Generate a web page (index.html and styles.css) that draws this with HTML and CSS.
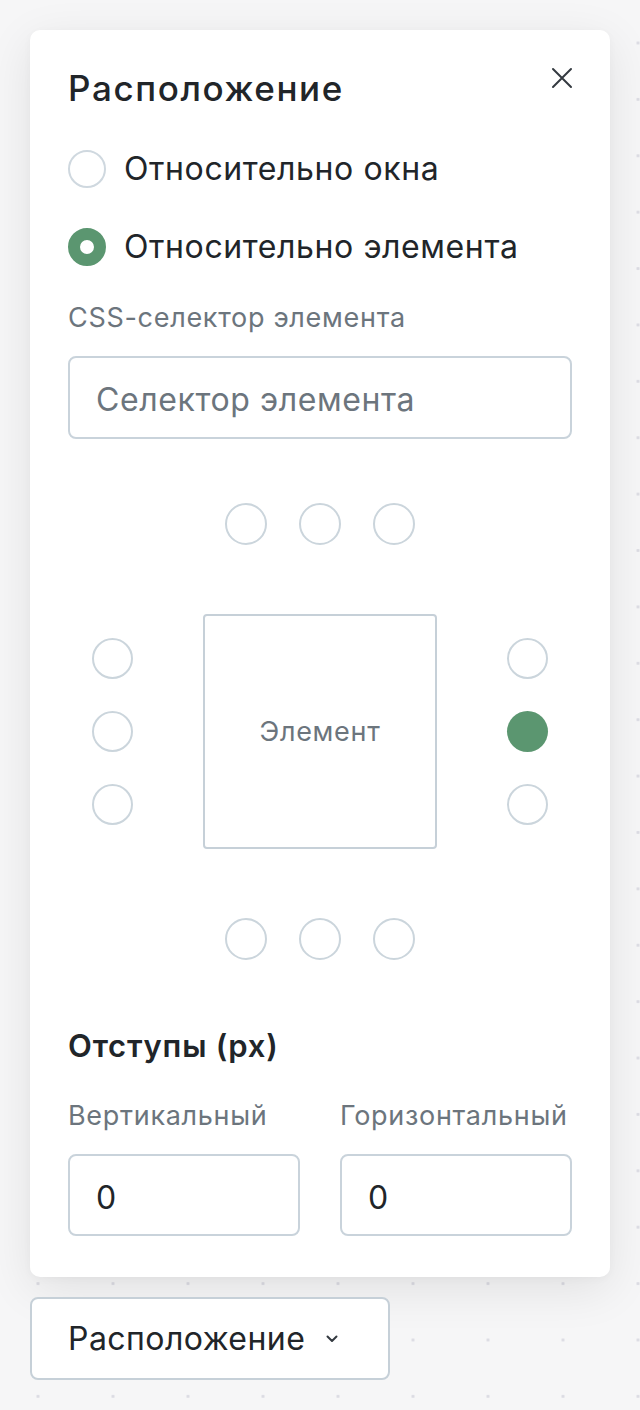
FILE: index.html
```html
<!DOCTYPE html>
<html lang="ru">
<head>
    <meta charset="UTF-8">
    <meta name="viewport" content="width=device-width, initial-scale=1.0">
    <title>Расположение</title>
    <link rel="stylesheet" href="styles.css">
</head>
<body>
    <div class="page">
        <div class="panel">
            <div class="panel-head">
                <h1>Расположение</h1>
                <button class="close" aria-label="Закрыть">
                    <svg width="22" height="22" viewBox="0 0 22 22">
                        <path d="M2 2L20 20M20 2L2 20" stroke="#343a40" stroke-width="2" stroke-linecap="round"/>
                    </svg>
                </button>
            </div>

            <div class="modes">
                <label class="mode">
                    <span class="radio"></span>
                    Относительно окна
                </label>
                <label class="mode">
                    <span class="radio checked"></span>
                    Относительно элемента
                </label>
            </div>

            <div class="field">
                <label class="field-label" for="selector">CSS-селектор элемента</label>
                <input class="text-input" type="text" id="selector" placeholder="Селектор элемента">
            </div>

            <!-- anchor points around the target element -->
            <div class="anchors">
                <div class="row top">
                    <span class="dot"></span>
                    <span class="dot"></span>
                    <span class="dot"></span>
                </div>
                <div class="col left">
                    <span class="dot"></span>
                    <span class="dot"></span>
                    <span class="dot"></span>
                </div>
                <div class="target">Элемент</div>
                <div class="col right">
                    <span class="dot"></span>
                    <span class="dot active"></span>
                    <span class="dot"></span>
                </div>
                <div class="row bottom">
                    <span class="dot"></span>
                    <span class="dot"></span>
                    <span class="dot"></span>
                </div>
            </div>

            <h2>Отступы (px)</h2>
            <div class="offsets">
                <div>
                    <label class="field-label" for="offsetY">Вертикальный</label>
                    <input class="text-input" type="text" id="offsetY" value="0">
                </div>
                <div>
                    <label class="field-label" for="offsetX">Горизонтальный</label>
                    <input class="text-input" type="text" id="offsetX" value="0">
                </div>
            </div>
        </div>

        <button class="toggle">
            Расположение
            <svg width="16" height="10" viewBox="0 0 16 10">
                <path d="M3.5 2.5L8 7L12.5 2.5" fill="none" stroke="#343a40" stroke-width="2" stroke-linecap="round" stroke-linejoin="round"/>
            </svg>
        </button>
    </div>
</body>
</html>
```

FILE: styles.css
```css
body {
    margin: 0;
    font-family: Inter, 'Noto Sans', sans-serif;
    color: #212529;
    background-color: #f6f6f7;
    background-image: radial-gradient(circle, #dcdce3 1.3px, transparent 1.8px);
    background-size: 75px 56.4px;
    background-position: 0.5px 14.8px;
    min-height: 1410px;
}
.page {
    padding: 30px;
}
.panel {
    width: 580px;
    box-sizing: border-box;
    background: #fff;
    border-radius: 10px;
    padding: 38px 38px 41px;
    box-shadow: 0 12px 48px rgba(0, 0, 0, 0.09), 0 2px 8px rgba(0, 0, 0, 0.03);
}
.panel-head {
    display: flex;
    justify-content: space-between;
    align-items: flex-start;
}
h1 {
    margin: 0;
    font-size: 35px;
    line-height: 40px;
    font-weight: 500;
    letter-spacing: 1.6px;
}
.close {
    border: none;
    background: none;
    padding: 0;
    margin: -1px -1px 0 0;
    width: 22px;
    height: 22px;
    cursor: pointer;
}
.modes {
    display: flex;
    flex-direction: column;
    gap: 38px;
    margin-top: 41px;
}
.mode {
    display: flex;
    align-items: center;
    gap: 18px;
    font-size: 32px;
    line-height: 40px;
    letter-spacing: 0.6px;
}
.radio {
    width: 38px;
    height: 38px;
    box-sizing: border-box;
    border: 2px solid #cfd8df;
    border-radius: 50%;
}
.radio.checked {
    border: 12px solid #5b9670;
    background: #fff;
}
.field {
    margin-top: 35px;
}
.field-label {
    display: block;
    font-size: 27px;
    line-height: 32px;
    letter-spacing: 0.7px;
    color: #6c757d;
    margin-bottom: 22px;
}
.text-input {
    display: block;
    width: 100%;
    height: 83px;
    box-sizing: border-box;
    border: 2px solid #c9d3db;
    border-radius: 8px;
    padding: 4px 26px 0;
    font-family: inherit;
    font-size: 32px;
    letter-spacing: 0.6px;
    color: #212529;
    background: #fff;
}
.text-input::placeholder {
    color: #6c757d;
}
.anchors {
    display: grid;
    grid-template-columns: 41px 234px 41px;
    grid-template-rows: 42px 235px 42px;
    column-gap: 70px;
    row-gap: 69px;
    justify-content: center;
    margin-top: 64px;
}
.row {
    grid-column: 1 / 4;
    display: flex;
    justify-content: center;
    gap: 32px;
}
.col {
    display: flex;
    flex-direction: column;
    justify-content: center;
    gap: 32px;
}
.dot {
    width: 42px;
    height: 42px;
    box-sizing: border-box;
    border: 2px solid #cbd5dc;
    border-radius: 50%;
}
.col .dot {
    width: 41px;
    height: 41px;
}
.dot.active {
    border: none;
    background: #5b9670;
}
.target {
    display: flex;
    align-items: center;
    justify-content: center;
    border: 2px solid #c6d0d8;
    border-radius: 4px;
    font-size: 27px;
    letter-spacing: 0.7px;
    color: #6c757d;
}
h2 {
    margin: 66px 0 0;
    font-size: 31px;
    line-height: 40px;
    font-weight: 600;
    letter-spacing: 0.8px;
}
.offsets {
    display: grid;
    grid-template-columns: 1fr 1fr;
    gap: 40px;
    margin-top: 34px;
}
.offsets .text-input {
    height: 82px;
    margin-top: 1px;
}
.toggle {
    display: flex;
    align-items: center;
    gap: 19px;
    margin-top: 20px;
    height: 83px;
    width: 360px;
    box-sizing: border-box;
    padding: 0 36px;
    border: 2px solid #c6d0d8;
    border-radius: 8px;
    background: #fff;
    font-family: inherit;
    font-size: 32px;
    letter-spacing: 0.45px;
    color: #212529;
    cursor: pointer;
}
```
